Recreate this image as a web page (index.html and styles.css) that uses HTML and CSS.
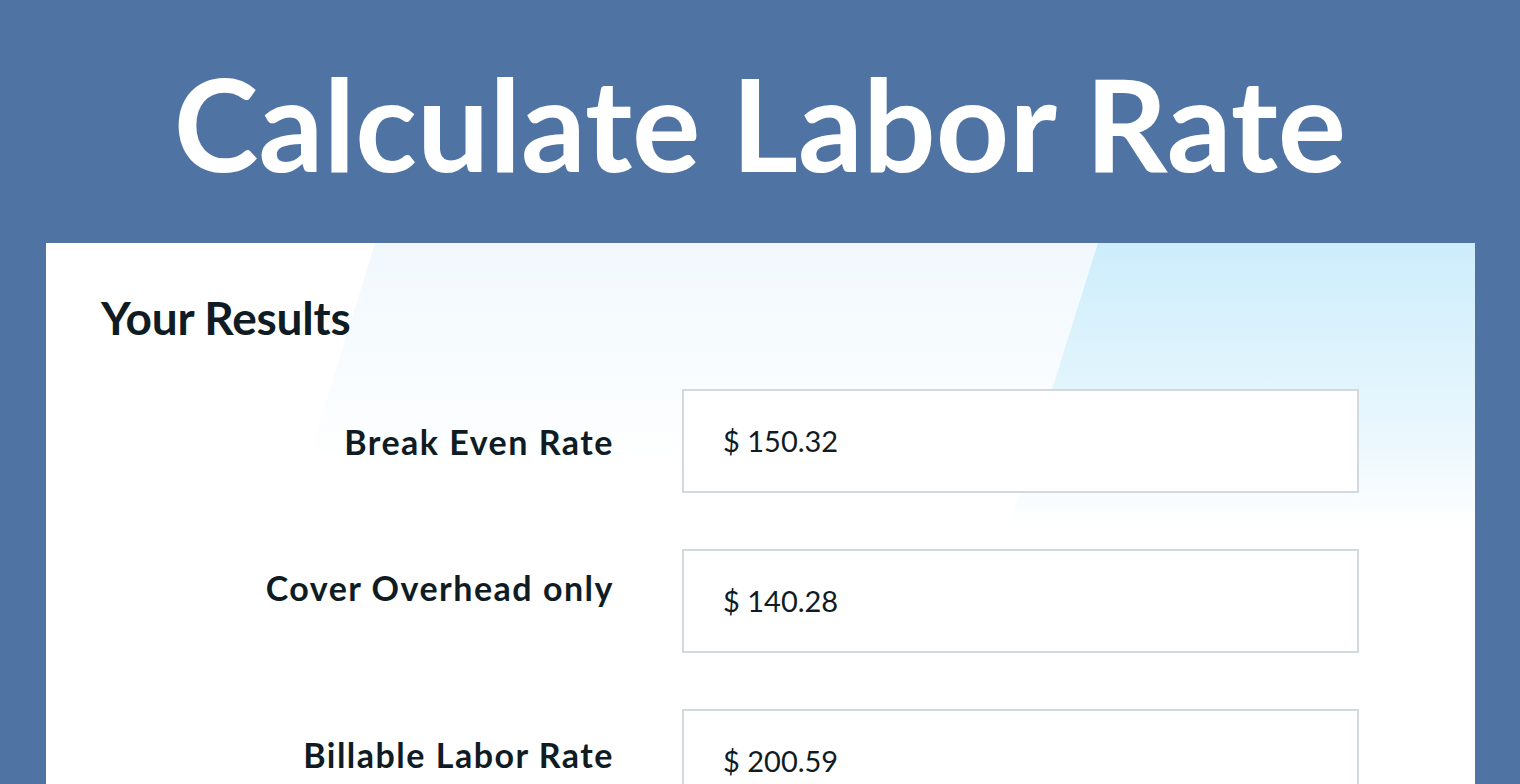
FILE: index.html
```html
<!DOCTYPE html>
<html lang="en">
<head>
<meta charset="utf-8">
<title>Calculate Labor Rate</title>
<link rel="stylesheet" href="styles.css">
</head>
<body>
<header class="hero">
  <h1 class="hero-title">Calculate Labor Rate</h1>
</header>
<main class="card">
  <div class="card-deco card-deco-faint"></div>
  <div class="card-deco card-deco-strong"></div>
  <div class="card-body">
    <h2 class="card-title">Your Results</h2>
    <div class="result-list">
      <div class="result-row">
        <div class="result-label">Break Even Rate</div>
        <div class="result-field">$ 150.32</div>
      </div>
      <div class="result-row result-row-2">
        <div class="result-label">Cover Overhead only</div>
        <div class="result-field">$ 140.28</div>
      </div>
      <div class="result-row result-row-3">
        <div class="result-label">Billable Labor Rate</div>
        <div class="result-field">$ 200.59</div>
      </div>
    </div>
  </div>
</main>
</body>
</html>
```
FILE: styles.css
```css
html, body {
  margin: 0;
  padding: 0;
}
body {
  background: #4f73a3;
  font-family: "Lato", "Liberation Sans", sans-serif;
  color: #0f1c24;
  width: 1520px;
  height: 784px;
  overflow: hidden;
}
.hero {
  height: 243px;
  display: flex;
  justify-content: center;
  box-sizing: border-box;
  padding-top: 48px;
}
.hero-title {
  margin: 0;
  color: #ffffff;
  font-size: 128px;
  line-height: 150px;
  font-weight: 700;
}
.card {
  position: relative;
  margin: 0 45px 0 46px;
  height: 541px;
  background: #ffffff;
  overflow: hidden;
}
.card-deco {
  position: absolute;
  top: 0;
  left: 0;
  right: 0;
  height: 420px;
  pointer-events: none;
}
.card-deco-faint {
  clip-path: polygon(329px 0, 100% 0, 100% 100%, 200px 100%);
  background: linear-gradient(180deg, #f1f8fd 0%, #f8fcfe 30%, rgba(255,255,255,0) 55%);
}
.card-deco-strong {
  clip-path: polygon(1052px 0, 100% 0, 100% 100%, 920px 100%);
  background: linear-gradient(180deg, #cdedfc 0%, #e6f6fd 40%, rgba(255,255,255,0) 68%);
}
.card-body {
  position: relative;
  padding: 47px 0 0 55px;
}
.card-title {
  margin: 0;
  font-size: 46px;
  line-height: 56px;
  font-weight: 700;
  letter-spacing: -0.2px;
}
.result-list {
  margin-top: 43px;
  display: flex;
  flex-direction: column;
  gap: 56px;
}
.result-row {
  display: flex;
  align-items: center;
  gap: 70px;
}
.result-label {
  width: 513px;
  margin-right: -2px;
  text-align: right;
  font-size: 34px;
  font-weight: 700;
  letter-spacing: 1.5px;
}
.result-row-2 .result-label {
  margin-bottom: 28px;
}
.result-row-3 .result-label {
  margin-bottom: 13px;
}
.result-field {
  box-sizing: border-box;
  width: 677px;
  height: 104px;
  border: 2px solid #d3dadd;
  background: #ffffff;
  padding-left: 39px;
  padding-bottom: 2px;
  display: flex;
  align-items: center;
  font-size: 29px;
  font-weight: 400;
}
```
